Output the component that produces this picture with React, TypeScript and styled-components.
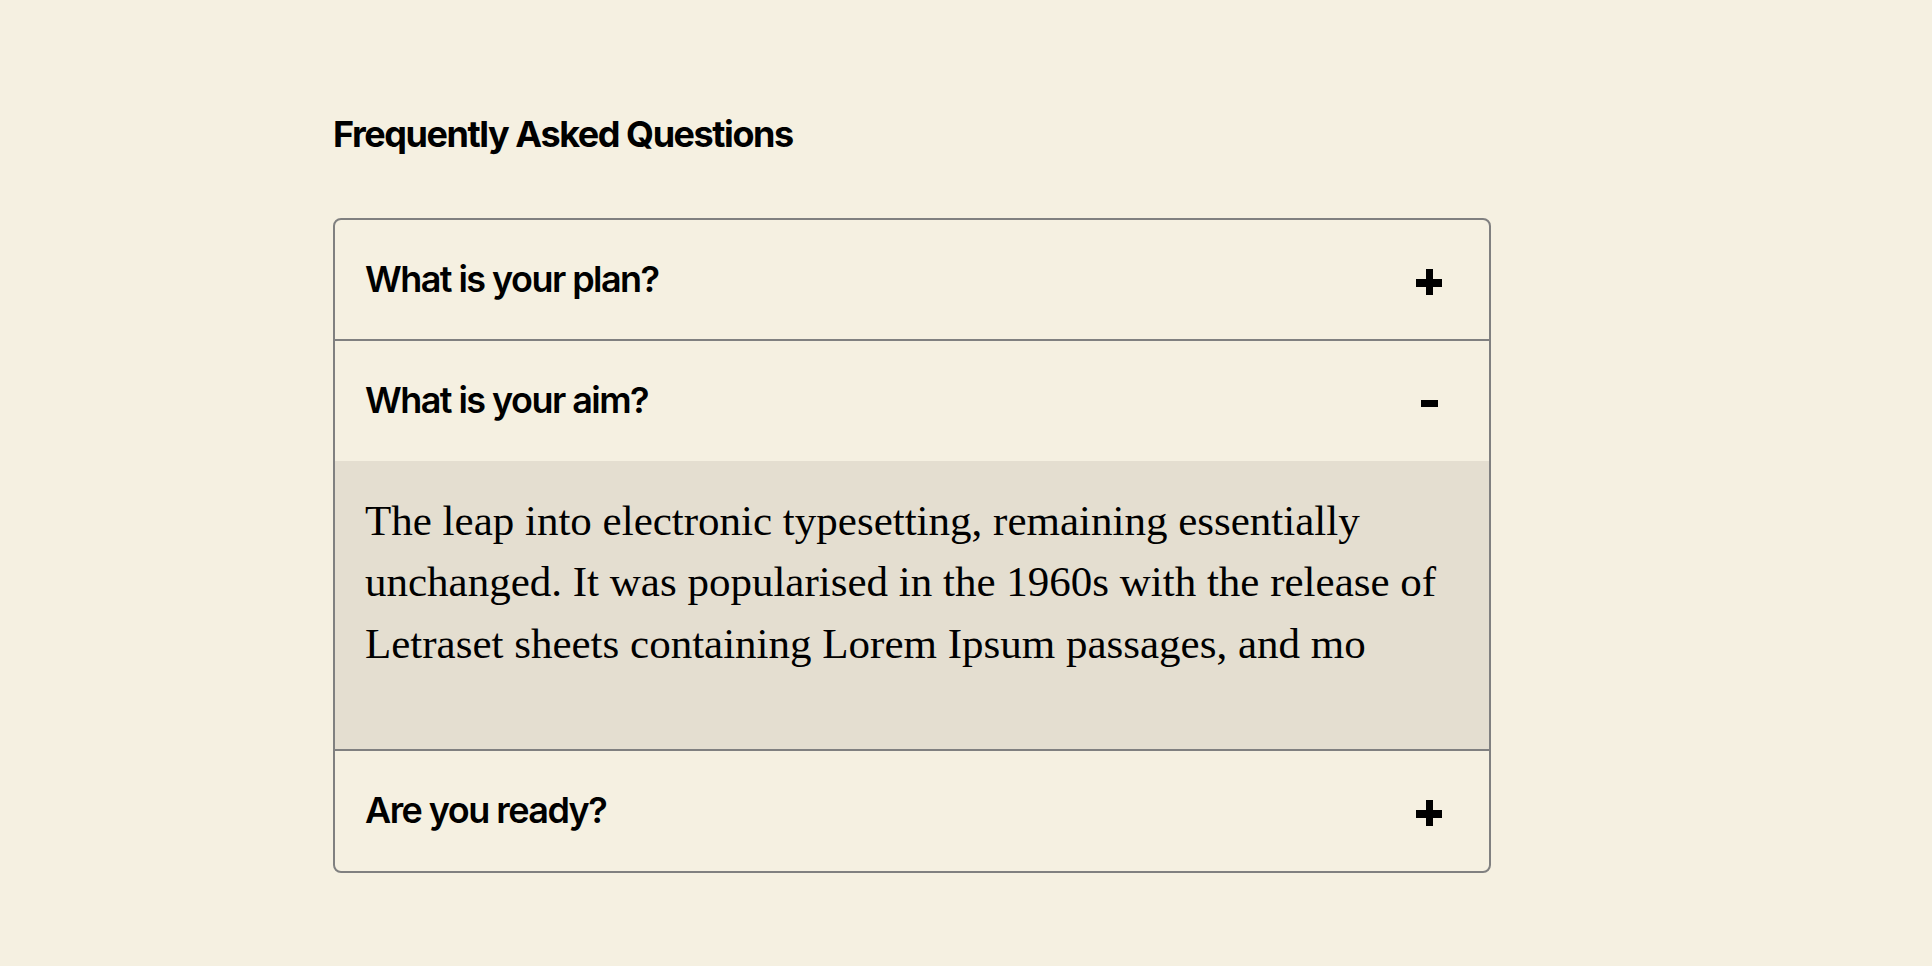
import * as React from "react";
import styled, { createGlobalStyle } from "styled-components";

const GlobalStyle = createGlobalStyle`
  html, body {
    margin: 0;
    padding: 0;
    background: #f5f0e1;
  }
  body {
    font-family: Inter, "Noto Sans", sans-serif;
    color: #000;
  }
`;

const Page = styled.main`
  min-height: 100vh;
  padding: 113px 0 0 333px;
  box-sizing: border-box;
`;

const Heading = styled.h2`
  margin: 0 0 62px;
  font-size: 36px;
  line-height: 1.2;
  font-weight: 700;
  letter-spacing: -0.04em;
`;

const List = styled.div`
  width: 1158px;
  box-sizing: border-box;
  border: 2px solid #808080;
  border-radius: 8px;
  overflow: hidden;
`;

const Item = styled.div`
  & + & {
    border-top: 2px solid #808080;
  }
`;

const Question = styled.button`
  display: flex;
  align-items: center;
  justify-content: space-between;
  width: 100%;
  padding: 38px 47px 38px 30px;
  border: none;
  background: transparent;
  cursor: pointer;
  font-family: inherit;
  font-size: 36px;
  line-height: 1.2;
  font-weight: 600;
  letter-spacing: -0.043em;
  color: #000;
  text-align: left;
`;

const Icon = styled.span<{ $open: boolean }>`
  position: relative;
  flex: none;
  width: 26px;
  height: 26px;
  margin-top: 5px;

  &::before,
  &::after {
    content: "";
    position: absolute;
    background: #000;
  }
  &::before {
    left: ${(p) => (p.$open ? "4.5px" : "0")};
    right: ${(p) => (p.$open ? "4.5px" : "0")};
    top: ${(p) => (p.$open ? "9.5px" : "10px")};
    height: ${(p) => (p.$open ? "7px" : "7.5px")};
  }
  &::after {
    display: ${(p) => (p.$open ? "none" : "block")};
    top: 0;
    bottom: 0;
    left: 9.5px;
    width: 7.5px;
  }
`;

const Answer = styled.div`
  background: #e4ded0;
  padding: 29px 30px 75px;
  font-family: "Liberation Serif", "Times New Roman", serif;
  font-size: 43px;
  line-height: 61.6px;
  color: #000;
`;

const faqs = [
  { q: "What is your plan?", a: "" },
  {
    q: "What is your aim?",
    a: "The leap into electronic typesetting, remaining essentially unchanged. It was popularised in the 1960s with the release of Letraset sheets containing Lorem Ipsum passages, and mo",
  },
  { q: "Are you ready?", a: "" },
];

export default function App() {
  const [open, setOpen] = React.useState<number | null>(1);

  return (
    <>
      <GlobalStyle />
      <Page>
        <Heading>Frequently Asked Questions</Heading>
        <List>
          {faqs.map((f, i) => (
            <Item key={f.q}>
              <Question onClick={() => setOpen(open === i ? null : i)}>
                {f.q}
                <Icon $open={open === i} aria-label={open === i ? "-" : "+"} />
              </Question>
              {open === i && <Answer>{f.a}</Answer>}
            </Item>
          ))}
        </List>
      </Page>
    </>
  );
}
